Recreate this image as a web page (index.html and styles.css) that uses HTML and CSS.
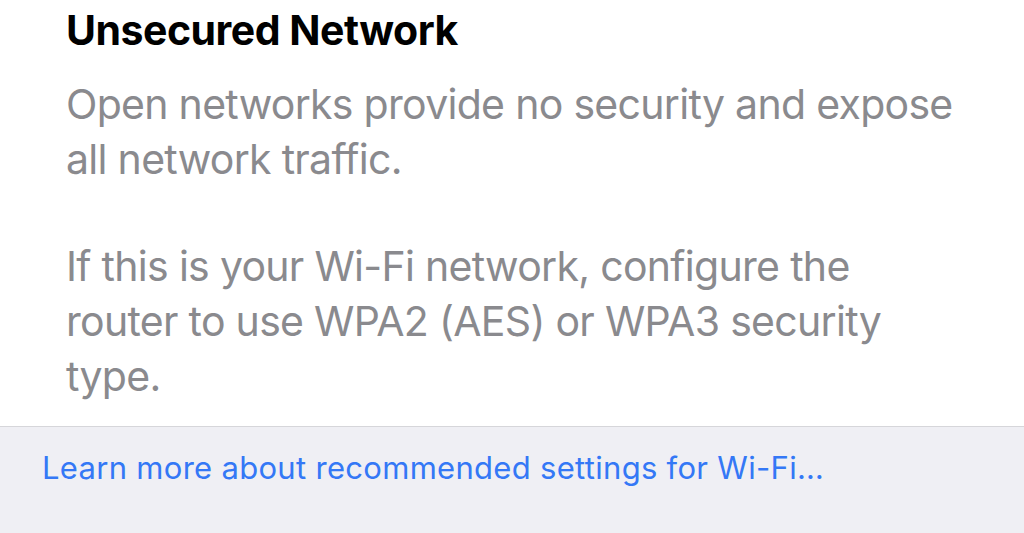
FILE: index.html
```html
<!DOCTYPE html>
<html lang="en">
<head>
    <meta charset="UTF-8">
    <meta name="viewport" content="width=device-width, initial-scale=1.0">
    <title>Unsecured Network</title>
    <link rel="stylesheet" href="styles.css">
</head>
<body>

    <!-- Warning text -->
    <div class="info">
        <div class="title">Unsecured Network</div>
        <p class="desc">Open networks provide no security and expose all network traffic.</p>
        <p class="desc">If this is your Wi-Fi network, configure the router to use WPA2 (AES) or WPA3 security type.</p>
    </div>

    <!-- Link footer -->
    <div class="footer">
        <a class="learn-link" href="#">Learn more about recommended settings for Wi-Fi…</a>
    </div>

</body>
</html>
```

FILE: styles.css
```css
/* Basic Reset */
* {
    margin: 0;
    padding: 0;
    box-sizing: border-box;
}

body {
    font-family: 'Inter', 'Noto Sans', sans-serif;
    background: #efeff4;
    height: 100vh;
    overflow: hidden;
    display: flex;
    flex-direction: column;
}

.info {
    background: #ffffff;
    padding: 5px 54px 22px 66px;
    border-bottom: 1px solid #d6d6da;
}

.title {
    font-size: 41px;
    font-weight: 700;
    color: #000000;
    line-height: 50px;
    letter-spacing: -0.5px;
    margin-bottom: 22px;
}

.desc {
    font-size: 41px;
    color: #8a8a8e;
    line-height: 55px;
    letter-spacing: -0.7px;
    margin-bottom: 52px;
}

.desc:last-child {
    margin-bottom: 0;
}

.footer {
    padding: 22px 42px;
}

.learn-link {
    font-size: 31px;
    color: #3478f6;
    letter-spacing: 0.3px;
    text-decoration: none;
}
```
